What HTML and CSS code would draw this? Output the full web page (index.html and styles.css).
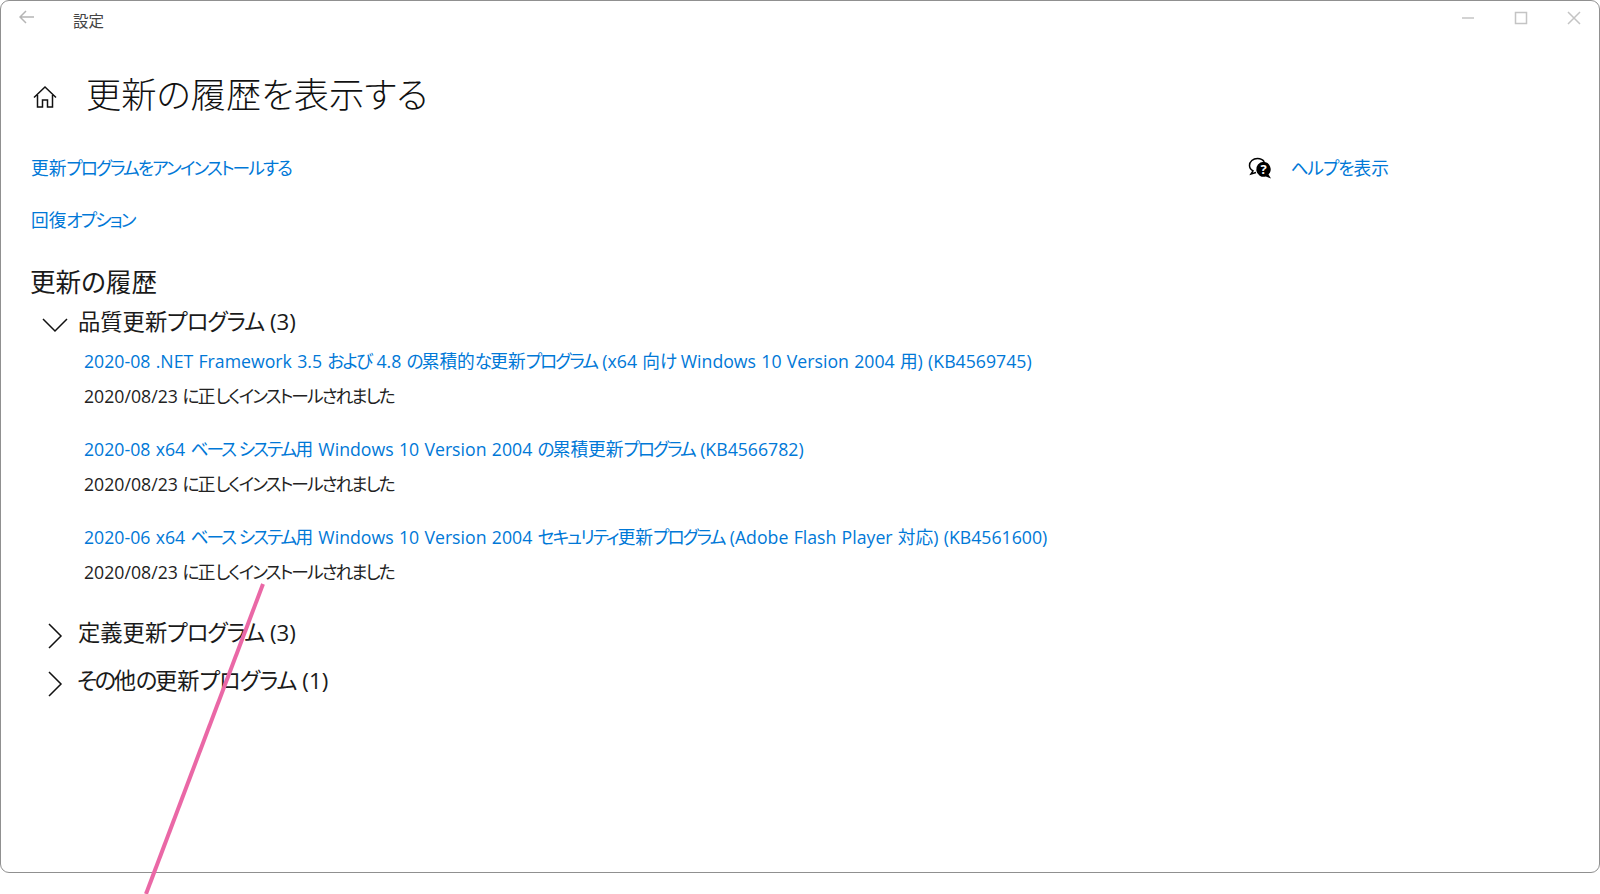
FILE: index.html
```html
<!DOCTYPE html>
<html lang="ja">
<head>
    <meta charset="UTF-8">
    <meta name="viewport" content="width=device-width, initial-scale=1.0">
    <title>設定</title>
    <link rel="stylesheet" href="styles.css">
</head>
<body>
    <div class="window">
        <div class="titlebar">
            <svg class="back-icon" width="16" height="14" viewBox="0 0 16 14"><path d="M15 7H1M7 1 1 7l6 6"/></svg>
            <span class="app-name">設定</span>
            <div class="window-controls">
                <svg width="14" height="14" viewBox="0 0 14 14"><path d="M1 7h12"/></svg>
                <svg width="14" height="14" viewBox="0 0 14 14"><rect x="1.5" y="1.5" width="11" height="11"/></svg>
                <svg width="14" height="14" viewBox="0 0 14 14"><path d="M1 1l12 12M13 1 1 13"/></svg>
            </div>
        </div>

        <div class="page-header">
            <svg class="home-icon" width="24" height="24" viewBox="0 0 24 24"><path d="M1 12.500 12 2l11 10.500M4.500 10v12h5v-7h5v7h5V10"/></svg>
            <h1>更新の履歴を表示する</h1>
        </div>

        <div class="top-row">
            <div class="top-links">
                <a class="link">更新<span class="kn">プログラムをアンインストールする</span></a>
                <a class="link">回復<span class="kn">オプション</span></a>
            </div>
            <div class="help">
                <svg class="help-icon" width="24" height="22" viewBox="0 0 24 22">
                    <path class="bubble-back" d="M8 15.500 3 17l2-3.200C2.500 12.500 1.500 10.500 1.500 8.500 1.500 4.500 5 1.500 9.500 1.500c3 0 5.500 1.300 6.800 3.300"/>
                    <path class="bubble-front" d="M15.500 4.800a7.500 7.500 0 0 1 5 12.700l2.500 4-5.200-2A7.500 7.500 0 1 1 15.500 4.800z"/>
                    <text class="help-mark" x="15.500" y="17">?</text>
                </svg>
                <a class="link"><span class="kn">ヘルプを</span>表示</a>
            </div>
        </div>

        <h2>更新の履歴</h2>

        <div class="group">
            <div class="group-title">
                <svg class="chevron" width="26" height="16" viewBox="0 0 26 16"><path d="M1 2l12 12L25 2"/></svg>
                <span>品質更新<span class="kn">プログラム</span> (3)</span>
            </div>
            <div class="update-list">
                <div class="update">
                    <a class="link">2020-08 .NET Framework 3.5 <span class="kn">および</span> 4.8 <span class="kn">の</span>累積的<span class="kn">な</span>更新<span class="kn">プログラム</span> (x64 向<span class="kn">け</span> Windows 10 Version 2004 用) (KB4569745)</a>
                    <div class="update-date">2020/08/23 <span class="kn">に</span>正<span class="kn">しくインストールされました</span></div>
                </div>
                <div class="update">
                    <a class="link">2020-08 x64 <span class="kn">ベース システム</span>用 Windows 10 Version 2004 <span class="kn">の</span>累積更新<span class="kn">プログラム</span> (KB4566782)</a>
                    <div class="update-date">2020/08/23 <span class="kn">に</span>正<span class="kn">しくインストールされました</span></div>
                </div>
                <div class="update">
                    <a class="link">2020-06 x64 <span class="kn">ベース システム</span>用 Windows 10 Version 2004 <span class="kn">セキュリティ</span>更新<span class="kn">プログラム</span> (Adobe Flash Player 対応) (KB4561600)</a>
                    <div class="update-date">2020/08/23 <span class="kn">に</span>正<span class="kn">しくインストールされました</span></div>
                </div>
            </div>
        </div>

        <div class="group collapsed">
            <div class="group-title">
                <svg class="chevron" width="26" height="26" viewBox="0 0 26 26"><path d="M7 1l12 12L7 25"/></svg>
                <span>定義更新<span class="kn">プログラム</span> (3)</span>
            </div>
        </div>
        <div class="group collapsed">
            <div class="group-title">
                <svg class="chevron" width="26" height="26" viewBox="0 0 26 26"><path d="M7 1l12 12L7 25"/></svg>
                <span class="other-title"><span class="kn-wide">その</span>他<span class="kn-wide">の</span>更新<span class="kn">プログラム</span> (1)</span>
            </div>
        </div>
    </div>

    <svg class="pointer-line" width="1600" height="894" viewBox="0 0 1600 894"><path d="M263 584 146 894"/></svg>
</body>
</html>
```

FILE: styles.css
```css
* {
    margin: 0;
    padding: 0;
    box-sizing: border-box;
}

html, body {
    height: 894px;
    overflow: hidden;
}

body {
    font-family: "Open Sans", "Noto Sans CJK JP", sans-serif;
    font-feature-settings: "palt";
    background: #fff;
    color: #1a1a1a;
    position: relative;
}

svg {
    display: block;
    flex: none;
}

svg path, svg rect {
    fill: none;
    stroke: currentColor;
    stroke-width: 1.5;
}

.window {
    width: 1600px;
    height: 873px;
    border: 1px solid #909090;
    border-radius: 9px;
    background: #fff;
    padding: 1px 30px 0;
}

.titlebar {
    display: flex;
    align-items: center;
    height: 40px;
    margin-left: -12px;
}

.back-icon {
    color: #b5b5b5;
    margin-top: -10px;
}

.app-name {
    margin-left: 38px;
    margin-top: -4px;
    font-size: 15.5px;
    color: #444;
}

.window-controls {
    display: flex;
    gap: 39px;
    margin-left: auto;
    margin-right: -12px;
    margin-top: -8px;
    color: #c4c4c4;
}

.page-header {
    display: flex;
    align-items: center;
    gap: 29px;
    height: 50px;
    margin-top: 27px;
    margin-left: 2px;
}

.home-icon {
    margin-top: 6px;
    color: #111;
}

h1 {
    font-size: 35.3px;
    font-weight: 300;
    color: #111;
    line-height: 50px;
}

.top-row {
    display: flex;
    justify-content: space-between;
    margin-top: 37px;
}

.top-links {
    display: flex;
    flex-direction: column;
    gap: 28px;
}

.link {
    color: #0078d7;
    font-size: 17.7px;
    line-height: 24px;
    word-spacing: 0.7px;
}

/* kana run narrower than the fallback CJK font */
.kn {
    letter-spacing: -1.9px;
}

.kn-wide {
    letter-spacing: -2.5px;
}

.help {
    display: flex;
    align-items: center;
    gap: 19px;
    height: 24px;
    margin-right: 180px;
}

.help .kn {
    letter-spacing: -1px;
}

.help-icon {
    color: #000;
}

.bubble-front {
    fill: #000;
    stroke: none;
}

.help-mark {
    font-size: 13px;
    font-weight: 700;
    fill: #fff;
    text-anchor: middle;
}

h2 {
    font-size: 25.6px;
    font-weight: 400;
    line-height: 32px;
    margin-top: 35px;
    margin-left: -1px;
}

.group {
    margin-top: 5px;
}

.group-title {
    display: flex;
    align-items: center;
    gap: 10px;
    height: 32px;
    font-size: 22.3px;
    margin-left: 11px;
}

.group-title .kn {
    letter-spacing: -1px;
}

.other-title {
    margin-left: -1px;
}

.chevron {
    color: #111;
    margin-top: 10px;
}

.update-list {
    display: flex;
    flex-direction: column;
    gap: 29px;
    margin-top: 13px;
    margin-left: 53px;
    padding-bottom: 15px;
}

.update-date {
    font-size: 17.7px;
    line-height: 24px;
    margin-top: 11px;
    color: #222;
}

.collapsed {
    margin-top: 16px;
}

.pointer-line {
    position: absolute;
    left: 0;
    top: 0;
    pointer-events: none;
}

.pointer-line path {
    stroke: #ea68a6;
    stroke-width: 4;
}
```
